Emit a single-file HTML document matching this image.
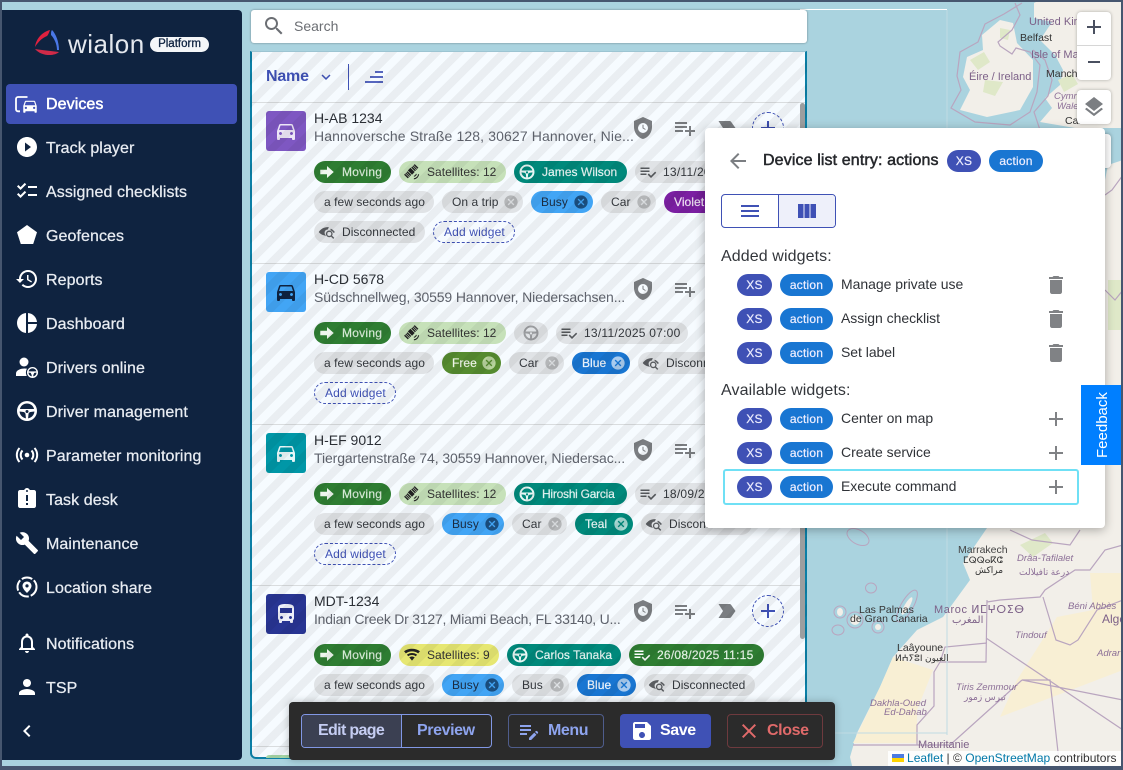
<!DOCTYPE html>
<html lang="en"><head><meta charset="utf-8"><title>Wialon Platform</title>
<style>
*{box-sizing:border-box}
html,body{margin:0;padding:0}
body{width:1123px;height:770px;position:relative;overflow:hidden;background:#aad3df;font-family:"Liberation Sans","Noto Sans CJK SC",sans-serif;color:#333}
svg{display:block;fill:currentColor}
.a{position:absolute}
#map{position:absolute;left:0;top:0;filter:blur(.35px)}
#map text{font-family:"Liberation Sans","DejaVu Sans","Noto Sans CJK SC",sans-serif}
.frame{position:absolute;inset:0;border:solid #46566f;border-width:2px 2px 4px 2px;pointer-events:none;z-index:50}
#side{position:absolute;left:2px;top:10px;width:240px;height:750px;background:#0f2340;border-radius:0 4px 4px 0}
.nav{position:absolute;left:46px;height:24px;line-height:24px;font-size:16px;color:#e8ecf2;white-space:nowrap;-webkit-text-stroke:.25px #e8ecf2;letter-spacing:.08px}
.ni{position:absolute;left:15px;width:24px;height:24px;color:#fff}
#act{position:absolute;left:6px;top:84px;width:231px;height:40px;background:#3f51b5;border-radius:4px}
#search{position:absolute;left:251px;top:10px;width:556px;height:33px;background:#fff;border-radius:3px;box-shadow:0 0 2px rgba(0,0,0,.4);z-index:3}
#panel{position:absolute;left:250px;top:51px;width:557px;height:708px;background:#f6fbff;border:2px solid #0b7fa6;border-top:1px solid #9cc4d2;border-radius:0 0 6px 6px;overflow:hidden}
#stripes{position:absolute;left:250px;top:52px;width:557px;height:706px;background:repeating-linear-gradient(135deg,rgba(0,0,0,.052) 0 8px,transparent 8px 16px);z-index:2;pointer-events:none;border-radius:0 0 6px 6px}
.row{position:absolute;left:0;width:1123px;height:161px}
.line{position:absolute;left:252px;width:553px;height:1px;background:#d9dcde;z-index:1}
.tile{position:absolute;left:266px;top:8px;width:40px;height:40px;border-radius:3px}
.tile svg{position:absolute;left:8px;top:8px;width:24px;height:24px}
.t1{position:absolute;left:314px;top:6px;font-size:14px;line-height:18px;color:#2b2f36;white-space:nowrap}
.t2{position:absolute;left:314px;top:24px;font-size:14px;line-height:18px;color:#60646e;white-space:nowrap}
.c{position:absolute;height:22px;border-radius:11px;line-height:22px;font-size:12px;white-space:nowrap;padding-left:10px;letter-spacing:.05px;overflow:hidden}
.c svg{position:absolute}
.c .l{left:4px;top:2px;width:18px;height:18px}
.c .x{right:4px;top:3px;width:16px;height:16px}
.g{background:#e0e3e6;color:#34383d}.g .x{color:#b4b6b8}.g .l{color:#55585c}
.mv{background:#2e7d32;color:#d8ebd8;padding-left:28px;-webkit-text-stroke:.2px #d8ebd8;letter-spacing:.25px}.mv .l{color:#eef6ee}
.sat{background:#c6e1b9;color:#333;padding-left:28px}
.sat9{background:#e6e772;color:#333;padding-left:28px}
.dr{background:#00897b;color:#e4f4f2;padding-left:28px;-webkit-text-stroke:.2px #e4f4f2}.dr .l{color:#e8f6f4}
.dt{background:#e0e3e6;color:#34383d;padding-left:28px;letter-spacing:.25px}.dt .l{color:#55585c}
.dtg{background:#2e7d32;color:#e6f3e6;padding-left:28px;-webkit-text-stroke:.2px #e6f3e6;letter-spacing:.25px}
.dc{background:#e0e3e6;color:#34383d;padding-left:28px}.dc .l{color:#5a5d61}
.busy{background:#42a5f5;color:#1b2b40}.busy .x{color:#1a4f80}
.blue{background:#1976d2;color:#eef5fc;-webkit-text-stroke:.2px #eef5fc}.blue .x{color:#a9cbee}
.free{background:#558b2f;color:#eef5e8;-webkit-text-stroke:.2px #eef5e8}.free .x{color:#b6d39c}
.teal{background:#00897b;color:#e8f6f4;-webkit-text-stroke:.2px #e8f6f4}.teal .x{color:#a5d8d2}
.vio{background:#7b1fa2;color:#f0e4f5;-webkit-text-stroke:.2px #f0e4f5}
.add{background:transparent;border:1px dashed #3f51b5;color:#3f51b5;line-height:20px;padding-left:10px;letter-spacing:.15px}
.ic{position:absolute;width:24px;height:24px;top:13px;color:#7b7e82}
.pl{position:absolute;left:752px;top:9px;width:32px;height:32px;border:1px dashed #3f51b5;border-radius:50%;color:#3f51b5}
.pl svg{position:absolute;left:3px;top:3px;width:24px;height:24px}
#pop{position:absolute;left:705px;top:128px;width:400px;height:400px;background:#fff;border-radius:4px;box-shadow:0 2px 10px rgba(0,0,0,.3);z-index:6}
.pc{position:absolute;height:22px;border-radius:11px;line-height:22px;text-align:center;font-size:12px;color:#eef;-webkit-text-stroke:.2px #eef;letter-spacing:.2px}
.xs{background:#3f51b5}.ac{background:#1976d2}
.wt{position:absolute;font-size:14px;line-height:20px;color:#2f3237;white-space:nowrap;letter-spacing:-.04px}
.wh{position:absolute;left:16px;font-size:16px;line-height:22px;color:#33363b;letter-spacing:.1px;white-space:nowrap}
.wi{position:absolute;left:339px;width:24px;height:24px;color:#808285}
#bar{position:absolute;left:289px;top:702px;width:546px;height:58px;background:#2b2b2b;border-radius:4px;box-shadow:0 0 8px rgba(0,0,0,.25);z-index:7}
.bb{position:absolute;top:12px;height:34px;line-height:32px;font-size:16px;font-weight:700;border-radius:4px;white-space:nowrap;letter-spacing:-.4px}
.bb svg{position:absolute;width:24px;height:24px;top:4px}
#fb{position:absolute;left:1081px;top:385px;width:42px;height:80px;background:#007fff;color:#fff;z-index:8;font-size:15px}
#fb span{position:absolute;left:1px;top:0;width:42px;height:80px;writing-mode:vertical-rl;transform:rotate(180deg);text-align:center;line-height:42px}
.zc{position:absolute;background:#fff;border-radius:4px;box-shadow:0 0 3px rgba(0,0,0,.3);z-index:4}
#attr{position:absolute;left:888px;top:751px;width:233px;height:15px;background:rgba(255,255,255,.85);font-size:12px;line-height:15px;color:#333;white-space:nowrap;z-index:5;padding-left:19px;letter-spacing:.02px}
#attr b{font-weight:400;color:#0078a8}
</style></head><body>

<svg width="0" height="0" style="position:absolute">
<symbol id="car" viewBox="0 0 24 24"><path d="M18.92 6.01C18.72 5.42 18.16 5 17.5 5h-11c-.66 0-1.21.42-1.42 1.01L3 12v8c0 .55.45 1 1 1h1c.55 0 1-.45 1-1v-1h12v1c0 .55.45 1 1 1h1c.55 0 1-.45 1-1v-8l-2.08-5.99zM6.5 16c-.83 0-1.5-.67-1.5-1.5S5.67 13 6.5 13s1.5.67 1.5 1.5S7.33 16 6.5 16zm11 0c-.83 0-1.5-.67-1.5-1.5s.67-1.5 1.5-1.5 1.5.67 1.5 1.5-.67 1.5-1.5 1.5zM5 11l1.5-4.5h11L19 11H5z"/></symbol>
<symbol id="bus" viewBox="0 0 24 24"><path d="M4 16c0 .88.39 1.67 1 2.22V20c0 .55.45 1 1 1h1c.55 0 1-.45 1-1v-1h8v1c0 .55.45 1 1 1h1c.55 0 1-.45 1-1v-1.78c.61-.55 1-1.34 1-2.22V6c0-3.5-3.58-4-8-4s-8 .5-8 4v10zm3.5 1c-.83 0-1.5-.67-1.5-1.5S6.67 14 7.5 14s1.5.67 1.5 1.5S8.33 17 7.5 17zm9 0c-.83 0-1.5-.67-1.5-1.5s.67-1.5 1.5-1.5 1.5.67 1.5 1.5-.67 1.5-1.5 1.5zm1.5-6H6V6h12v5z"/></symbol>
<symbol id="arrow" viewBox="0 0 24 24"><path d="M12 4v5H3v6h9v5l9-8z"/></symbol>
<symbol id="sat" viewBox="0 0 24 24"><g transform="rotate(-45 11 11)"><rect x="8.5" y="7" width="5" height="8" fill="#222"/><rect x="1" y="7.5" width="6.5" height="7" fill="#222"/><rect x="14.5" y="7.5" width="6.5" height="7" fill="#222"/><path d="M3.2 7.5v7M5.3 7.5v7M16.7 7.5v7M18.8 7.5v7" stroke="#cfe3c4" stroke-width=".7" fill="none"/></g><path d="M14.5 21c3 0 6-2.6 6.3-6M14.5 17.5c1.5 0 3-1.2 3.2-3" stroke="#222" stroke-width="1.5" fill="none"/></symbol>
<symbol id="wifi" viewBox="0 0 24 24"><path d="M12 19.5l3.6-4.4c-2.2-1.5-5-1.5-7.2 0z" fill="#222"/><path d="M6.9 13.6c3-2.2 7.2-2.2 10.2 0l1.7-2.1c-4-3-9.6-3-13.6 0zM3.8 9.8c4.8-3.6 11.6-3.6 16.4 0L22.6 7C16.4 2.6 7.6 2.6 1.4 7z" fill="#222"/></symbol>
<symbol id="wheel" viewBox="0 0 24 24"><path fill-rule="evenodd" d="M12 2a10 10 0 1 0 0 20 10 10 0 0 0 0-20zm0 2.5c3.4 0 6.3 2.2 7.1 5.5H4.9C5.7 6.7 8.6 4.5 12 4.5zM4.6 12.5l4 .5c1 .2 1.7 1 1.9 2l.4 4.4a7.5 7.5 0 0 1-6.3-6.9zm14.8 0a7.5 7.5 0 0 1-6.3 6.9l.4-4.4c.2-1 .9-1.8 1.9-2zM12 11a1.5 1.5 0 1 1 0 3 1.5 1.5 0 0 1 0-3z"/></symbol>
<symbol id="chk" viewBox="0 0 24 24"><path d="M14 10H2v2h12v-2zm0-4H2v2h12V6zM2 16h8v-2H2v2zm19.5-4.5L23 13l-6.99 7-4.51-4.5L13 14l3.01 3 5.49-5.5z"/></symbol>
<symbol id="can" viewBox="0 0 24 24"><path d="M12 2C6.47 2 2 6.47 2 12s4.47 10 10 10 10-4.47 10-10S17.53 2 12 2zm5 13.59L15.59 17 12 13.41 8.41 17 7 15.59 10.59 12 7 8.41 8.41 7 12 10.59 15.59 7 17 8.41 13.41 12 17 15.59z"/></symbol>
<symbol id="disc" viewBox="0 0 24 24"><path d="M1 12C4 7.5 9 5 14.5 5.6l-1.6 3.2C10.5 8.7 8.8 10.500 8.800 13c0 1.600.8 3 2 4C6.500 16.500 3 14.800 1 12z"/><path d="M17 7.500c2.200 1 4 2.600 5.500 4.500l-1.500 1.500c-1-1.600-2.500-3-4.500-4z"/><circle cx="15" cy="14.500" r="3.600" fill="none" stroke="currentColor" stroke-width="1.800"/><path d="M17.500 17l3.500 3.500" stroke="currentColor" stroke-width="2" fill="none"/></symbol>
<symbol id="shield" viewBox="0 0 24 24"><path fill-rule="evenodd" d="M12 1 3 5v6c0 5.550 3.840 10.740 9 12 5.160-1.260 9-6.450 9-12V5l-9-4zm0 6a5 5 0 1 1 0 10 5 5 0 0 1 0-10z"/><path d="M11.500 8.800h1v3l2.200 1.300-.5.8-2.700-1.600z"/></symbol>
<symbol id="pladd" viewBox="0 0 24 24"><path d="M14 10H2v2h12v-2zm0-4H2v2h12V6zm4 8v-4h-2v4h-4v2h4v4h2v-4h4v-2h-4zM2 16h8v-2H2v2z"/></symbol>
<symbol id="label" viewBox="0 0 24 24"><path d="M3.500 18.990l11 .01c.67 0 1.270-.33 1.630-.84L20.500 12l-4.370-6.160c-.36-.51-.96-.84-1.630-.84l-11 .01L8 12l-4.500 6.990z"/></symbol>
<symbol id="plus" viewBox="0 0 24 24"><path d="M19 13h-6v6h-2v-6H5v-2h6V5h2v6h6v2z"/></symbol>
<symbol id="trash" viewBox="0 0 24 24"><path d="M6 19c0 1.100.9 2 2 2h8c1.100 0 2-.9 2-2V7H6v12zM19 4h-3.500l-1-1h-5l-1 1H5v2h14V4z"/></symbol>
</svg>

<svg id="map" width="1123" height="770" viewBox="0 0 1123 770">
<rect width="1123" height="770" fill="#aad3df"/>
<g fill="#f2efe9" stroke="none">
<path d="M982 35 1000 20 1013 23 1017 43 1033 60 1033 87 1020 110 987 117 960 110 970 90 963 77 967 57 983 50z"/>
<path d="M1034 3 1040 0 1123 0 1123 128 1075 128 1040 122 1052 108 1045 98 1060 85 1063 70 1055 55 1040 40 1052 22 1034 18z"/>
<path d="M1108 165 1123 160 1123 385 1105 385 1105 180z"/>
<path d="M987 528 963 563 970 580 943 617 917 630 893 657 880 687 857 733 850 757 853 770 1123 770 1123 385 1105 385 1080 528z"/>
</g>
<g fill="#dfe8c8" stroke="none"><path d="M970 60l14-8 6 10-12 8zM985 80l18 2-8 14-12-4zM1000 28l10 2-2 10-8-2zM1058 80l14-6 6 10-14 8zM1108 280h15v50h-15zM1020 545l25-12 8 10-20 14z"/></g>
<g fill="#f8efd4" stroke="none"><path d="M893 657 933 670 917 710 917 743 853 743 880 687z"/><path d="M1090 573 1123 573 1123 670 1000 717 1017 680 1057 617 1093 610z"/></g>
<g fill="none" stroke="#b9a5bf" stroke-width="1.200">
<path d="M1022 3 1004 14 985 24 978 42 960 52 957 76 961 90 951 108 975 122 1010 125 1030 112 1037 92 1040 65 1030 52 1016 48 1012 54 1000 46 998 42 1012 30 1020 15 1015 3"/>
<path d="M1040 130 1034 112 1048 96 1052 80 1045 60 1033 50"/>
<path d="M1105 195 1112 190 1123 175M1105 290 1115 300 1123 290"/>
<path d="M987 600 986 662 940 662 945 647 987 643M986 638 1123 730M940 662 934 672 934 706 917 725 917 745 853 745M1022 680 1123 700M1022 680 1050 680 1060 770M1022 680 1000 700 950 745 917 745M987 602 1000 600 1040 597 1045 590 1075 570 1090 570 1105 550 1123 545M1010 530 1032 540 1070 545 1080 530"/>
<path d="M1043 597 1056 640 1070 645 1078 640 1097 610 1123 600"/>
</g>
<g fill="#aad3df" stroke="#b9a5bf" stroke-width="1"><ellipse cx="871" cy="588" rx="5.500" ry="5"/><ellipse cx="840" cy="612" rx="6" ry="6"/><ellipse cx="838" cy="630" rx="6" ry="5"/><ellipse cx="878" cy="627" rx="6" ry="6"/><ellipse cx="855" cy="620" rx="8" ry="8"/><ellipse cx="907" cy="606" rx="6" ry="18" transform="rotate(30 907 606)"/><ellipse cx="858" cy="537" rx="12" ry="7" transform="rotate(30 858 537)"/></g>
<g fill="#f2efe9"><ellipse cx="840" cy="612" rx="3" ry="4"/><ellipse cx="855" cy="620" rx="5" ry="5"/><ellipse cx="878" cy="627" rx="3" ry="3"/><ellipse cx="907" cy="606" rx="2.500" ry="10" transform="rotate(30 907 606)"/></g>
<path d="M947 10V735M800 733H947" stroke="#c0dbe3" stroke-width="1" fill="none"/>
<path d="M800 9.500H947" stroke="#fff" stroke-width="1" fill="none"/>
<g font-size="10.500" fill="#333">
<text x="1020" y="41">Belfast</text><text x="1046" y="77">Manchester</text><text x="1065" y="124">Cardiff</text>
<text x="958" y="553" fill="#444">Marrakech</text><text x="963" y="563" font-size="9">ⵎⵕⵕⴰⴽⵛ</text><text x="975" y="573" font-size="9">مراكش</text>
<text x="859" y="613">Las Palmas</text><text x="850" y="622">de Gran Canaria</text><text x="897" y="651">Laâyoune</text><text x="895" y="661" font-size="9">ⵍⵄⵢⵓⵏ العيون</text>
</g>
<g font-size="11" fill="#7d6188">
<text x="1029" y="25">United Kingdom</text><text x="1031" y="58">Isle of Man</text><text x="969" y="80">Éire / Ireland</text>
<text x="934" y="613" letter-spacing=".6">Maroc ⵍⵎⵖⵔⵉⴱ</text><text x="952" y="623" font-size="10">المغرب</text><text x="918" y="748">Mauritanie</text>
</g>
<g font-size="9.500" font-style="italic" fill="#8c6f97">
<text x="1017" y="561">Drâa-Tafilalet</text><text x="1019" y="575" font-style="normal" font-size="9">درعة تافيلالت</text><text x="1015" y="638">Tindouf</text><text x="956" y="690">Tiris Zemmour</text><text x="964" y="700" font-style="normal" font-size="9">تيرس زمور</text>
<text x="870" y="706">Dakhla-Oued</text><text x="884" y="715">Ed-Dahab</text><text x="1068" y="609">Béni Abbès</text><text x="1097" y="656">Adrar</text>
<text x="1054" y="99">Cymru /</text><text x="1057" y="109">Wales</text>
</g>
<text x="1102" y="623" font-size="12" fill="#7d6188">Algérie</text>
</svg>

<div id="side"></div>
<svg class="a" style="left:33px;top:29px" width="28" height="28" viewBox="0 0 28 28">
<path d="M2 18C3 10 9 3 17 1 16 4 15 6 14 7 9 9 5 13 2 18z" fill="#e0213f"/>
<path d="M19 1C23 5 26 13 26 21L24 21C24 15 21 9 18 6 18 4 18 2 19 1z" fill="#4a78e8"/>
<path d="M2 20C8 21 18 22 26 23 22 27 9 28 2 20z" fill="#d02a48"/>
</svg>
<div class="a" style="left:68px;top:28px;font-size:26px;line-height:32px;color:#e4e8ee;font-weight:400;letter-spacing:.5px">wialon</div>
<div class="a" style="left:150px;top:37px;width:59px;height:15px;border-radius:8px;background:#f4f6f8;color:#0f2340;text-align:center;font-size:11.500px;line-height:15px;-webkit-text-stroke:.3px #0f2340">Platform</div>
<div id="act"></div>
<div class="nav" style="top:93px;-webkit-text-stroke:.5px #fff;color:#fff">Devices</div>
<div class="nav" style="top:137px">Track player</div>
<div class="nav" style="top:181px">Assigned checklists</div>
<div class="nav" style="top:225px">Geofences</div>
<div class="nav" style="top:269px">Reports</div>
<div class="nav" style="top:313px">Dashboard</div>
<div class="nav" style="top:357px">Drivers online</div>
<div class="nav" style="top:401px">Driver management</div>
<div class="nav" style="top:445px">Parameter monitoring</div>
<div class="nav" style="top:489px">Task desk</div>
<div class="nav" style="top:533px">Maintenance</div>
<div class="nav" style="top:577px">Location share</div>
<div class="nav" style="top:633px">Notifications</div>
<div class="nav" style="top:677px">TSP</div>
<svg class="ni" style="top:91px" viewBox="0 0 24 24"><path d="M5 20.300H3a2 2 0 0 1-2-2V8a2 2 0 0 1 2-2h9.500" fill="none" stroke="#fff" stroke-width="1.800"/><g transform="translate(6 6) scale(.75)"><path d="M18.920 6.010C18.720 5.420 18.160 5 17.500 5h-11c-.66 0-1.210.42-1.420 1.010L3 12v8c0 .55.45 1 1 1h1c.55 0 1-.45 1-1v-1h12v1c0 .55.45 1 1 1h1c.55 0 1-.45 1-1v-8l-2.080-5.990zM6.500 16c-.83 0-1.500-.67-1.500-1.500S5.670 13 6.500 13s1.500.67 1.500 1.500S7.330 16 6.500 16zm11 0c-.83 0-1.500-.67-1.500-1.500s.67-1.500 1.500-1.500 1.500.67 1.500 1.500-.67 1.500-1.500 1.500zM5 11l1.500-4.500h11L19 11H5z" stroke="#3f51b5" stroke-width="2" paint-order="stroke"/></g></svg>
<svg class="ni" style="top:135px" viewBox="0 0 24 24"><path d="M12 2C6.480 2 2 6.480 2 12s4.480 10 10 10 10-4.480 10-10S17.520 2 12 2zm-2 14.500v-9l6 4.500-6 4.500z"/></svg>
<svg class="ni" style="top:179px" viewBox="0 0 24 24"><path d="M22 7h-9v2h9V7zm0 8h-9v2h9v-2zM5.540 11 2 7.460l1.410-1.410 2.120 2.120 4.240-4.240 1.410 1.410L5.540 11zm0 8L2 15.460l1.410-1.410 2.120 2.120 4.240-4.240 1.410 1.410L5.540 19z"/></svg>
<svg class="ni" style="top:223px" viewBox="0 0 24 24"><path d="M2 9.200 12 2l10 7.200-3.800 11.800H5.800z"/></svg>
<svg class="ni" style="top:267px" viewBox="0 0 24 24"><path d="M13 3c-4.970 0-9 4.030-9 9H1l3.890 3.890.07.140L9 12H6c0-3.870 3.130-7 7-7s7 3.130 7 7-3.130 7-7 7c-1.930 0-3.680-.79-4.940-2.060l-1.420 1.420C8.270 19.990 10.510 21 13 21c4.970 0 9-4.030 9-9s-4.030-9-9-9zm-1 5v5l4.280 2.540.72-1.210-3.500-2.080V8H12z"/></svg>
<svg class="ni" style="top:311px" viewBox="0 0 24 24"><path d="M11 2v20c-5.070-.5-9-4.790-9-10s3.930-9.500 9-10zm2.030 0v8.990H22c-.47-4.740-4.240-8.520-8.970-8.990zm0 11.010V22c4.740-.47 8.500-4.250 8.970-8.990h-8.970z"/></svg>
<svg class="ni" style="top:355px" viewBox="0 0 24 24"><circle cx="9" cy="7" r="4.500"/><path d="M1 21v-2.500C1 15 6 13.500 9.500 13.500c1 0 1.500.1 2.500.3-1.200 1.800-1.500 4.700-.2 7.200z"/><path fill-rule="evenodd" d="M17.500 12a5.500 5.500 0 1 0 0 11 5.500 5.500 0 0 0 0-11zm0 1.400c1.900 0 3.500 1.200 3.900 3h-7.800c.4-1.800 2-3 3.900-3zm-4 4.200 2.200.3 1 2.100v1.400a4.200 4.200 0 0 1-3.200-3.800zm8 0a4.200 4.200 0 0 1-3.200 3.800v-1.400l1-2.100z"/></svg>
<svg class="ni" style="top:399px"><use href="#wheel"/></svg>
<svg class="ni" style="top:443px" viewBox="0 0 24 24"><circle cx="12" cy="12" r="2.300"/><g fill="none" stroke="#fff" stroke-width="2"><path d="M7.500 7.500a6.500 6.500 0 0 0 0 9M16.500 7.500a6.500 6.500 0 0 1 0 9"/><path d="M4.500 5a10.500 10.500 0 0 0 0 14M19.500 5a10.500 10.500 0 0 1 0 14"/></g></svg>
<svg class="ni" style="top:487px" viewBox="0 0 24 24"><path d="M19 3h-4.180C14.400 1.840 13.300 1 12 1c-1.300 0-2.400.84-2.820 2H5c-1.100 0-2 .9-2 2v14c0 1.100.9 2 2 2h14c1.100 0 2-.9 2-2V5c0-1.100-.9-2-2-2zm-6 15h-2v-2h2v2zm0-4h-2V8h2v6zm-1-9c-.55 0-1-.45-1-1s.45-1 1-1 1 .45 1 1-.45 1-1 1z"/></svg>
<svg class="ni" style="top:531px" viewBox="0 0 24 24"><path d="M22.700 19l-9.100-9.100c.9-2.300.4-5-1.500-6.900-2-2-5-2.400-7.400-1.300L9 6 6 9 1.600 4.700C.4 7.100.9 10.100 2.900 12.100c1.900 1.900 4.600 2.400 6.900 1.500l9.100 9.100c.4.4 1 .4 1.400 0l2.300-2.300c.5-.4.5-1.100.1-1.400z"/></svg>
<svg class="ni" style="top:575px" viewBox="0 0 24 24"><circle cx="12" cy="12" r="9.500" fill="none" stroke="#fff" stroke-width="2" stroke-dasharray="11 2 11 2 11 2 11 2"/><path fill-rule="evenodd" d="M12 6.500c-2.500 0-4.500 2-4.500 4.400C7.500 14 12 18 12 18s4.500-4 4.500-7.100c0-2.400-2-4.400-4.500-4.400zm0 6a1.600 1.600 0 1 1 0-3.200 1.600 1.600 0 0 1 0 3.200z"/></svg>
<svg class="ni" style="top:631px" viewBox="0 0 24 24"><path d="M12 22c1.100 0 2-.9 2-2h-4c0 1.100.9 2 2 2zm6-6v-5c0-3.070-1.630-5.640-4.500-6.320V4c0-.83-.67-1.500-1.500-1.500s-1.500.67-1.500 1.500v.68C7.640 5.360 6 7.920 6 11v5l-2 2v1h16v-1l-2-2zm-2 1H8v-6c0-2.480 1.510-4.500 4-4.500s4 2.020 4 4.500v6z"/></svg>
<svg class="ni" style="top:675px" viewBox="0 0 24 24"><path d="M12 12c2.210 0 4-1.790 4-4s-1.790-4-4-4-4 1.790-4 4 1.790 4 4 4zm0 2c-2.670 0-8 1.340-8 4v2h16v-2c0-2.660-5.330-4-8-4z"/></svg>
<svg class="ni" style="top:719px" viewBox="0 0 24 24"><path d="M15.410 7.410 14 6l-6 6 6 6 1.410-1.410L10.830 12z"/></svg>

<div id="search">
<svg class="a" style="left:11px;top:4px;color:#6b6e73" width="24" height="24" viewBox="0 0 24 24"><path d="M15.500 14h-.79l-.28-.27C15.410 12.590 16 11.110 16 9.500 16 5.910 13.090 3 9.500 3S3 5.910 3 9.500 5.910 16 9.500 16c1.610 0 3.090-.59 4.230-1.570l.27.28v.79l5 4.990L20.490 19l-4.990-5zm-6 0C7.010 14 5 11.990 5 9.500S7.010 5 9.500 5 14 7.010 14 9.500 11.990 14 9.500 14z"/></svg>
<div class="a" style="left:43px;top:6px;font-size:14px;line-height:20px;color:#6b6e73">Search</div>
</div>

<div id="panel"></div>
<div class="a" style="left:266px;top:67px;font-size:16px;line-height:20px;font-weight:700;color:#3f51b5;z-index:1;letter-spacing:-.2px">Name</div>
<svg class="a" style="left:317px;top:68px;color:#3f51b5;z-index:1" width="18" height="18" viewBox="0 0 24 24"><path d="M7.410 8.590 12 13.170l4.590-4.580L18 10l-6 6-6-6z"/></svg>
<div class="a" style="left:348px;top:64px;width:1px;height:26px;background:#3f51b5;z-index:1"></div>
<svg class="a" style="left:364px;top:70px;z-index:1" width="21" height="15" viewBox="0 0 21 15"><path d="M11 2h8M6 7h13M1 12h18" stroke="#3f51b5" stroke-width="1.700" fill="none"/></svg>
<div class="line" style="top:102px"></div>
<div class="line" style="top:263px"></div>
<div class="line" style="top:424px"></div>
<div class="line" style="top:585px"></div>
<div class="line" style="top:746px"></div>

<!-- Row 1 -->
<div class="row" style="top:103px;z-index:1">
<div class="tile" style="background:#7e57c2;color:#ece6f7"><svg><use href="#car"/></svg></div>
<div class="t1">H-AB 1234</div>
<div class="t2" style="letter-spacing:.12px">Hannoversche Straße 128, 30627 Hannover, Nie...</div>
<svg class="ic" style="left:631px"><use href="#shield"/></svg>
<svg class="ic" style="left:673px"><use href="#pladd"/></svg>
<svg class="ic" style="left:715px"><use href="#label"/></svg>
<div class="pl"><svg><use href="#plus"/></svg></div>
<div class="c mv" style="left:314px;top:58px;width:77px"><svg class="l"><use href="#arrow"/></svg>Moving</div>
<div class="c sat" style="left:399px;top:58px;width:107px"><svg class="l" style="left:4px"><use href="#sat"/></svg>Satellites: 12</div>
<div class="c dr" style="left:514px;top:58px;width:113px"><svg class="l"><use href="#wheel"/></svg>James Wilson</div>
<div class="c dt" style="left:635px;top:58px;width:125px"><svg class="l"><use href="#chk"/></svg>13/11/2025 07:00</div>
<div class="c g" style="left:314px;top:88px;width:120px">a few seconds ago</div>
<div class="c g" style="left:442px;top:88px;width:81px">On a trip<svg class="x"><use href="#can"/></svg></div>
<div class="c busy" style="left:531px;top:88px;width:62px">Busy<svg class="x"><use href="#can"/></svg></div>
<div class="c g" style="left:601px;top:88px;width:55px">Car<svg class="x"><use href="#can"/></svg></div>
<div class="c vio" style="left:664px;top:88px;width:70px">Violet</div>
<div class="c dc" style="left:314px;top:118px;width:111px"><svg class="l"><use href="#disc"/></svg>Disconnected</div>
<div class="c add" style="left:433px;top:118px;width:82px">Add widget</div>
</div>

<!-- Row 2 -->
<div class="row" style="top:264px;z-index:1">
<div class="tile" style="background:#42a5f5;color:#0f2340"><svg><use href="#car"/></svg></div>
<div class="t1">H-CD 5678</div>
<div class="t2" style="letter-spacing:-.14px">Südschnellweg, 30559 Hannover, Niedersachsen...</div>
<svg class="ic" style="left:631px"><use href="#shield"/></svg>
<svg class="ic" style="left:673px"><use href="#pladd"/></svg>
<div class="c mv" style="left:314px;top:58px;width:77px"><svg class="l"><use href="#arrow"/></svg>Moving</div>
<div class="c sat" style="left:399px;top:58px;width:107px"><svg class="l"><use href="#sat"/></svg>Satellites: 12</div>
<div class="c g" style="left:514px;top:58px;width:34px"><svg class="l" style="left:8px;color:#9a9c9f"><use href="#wheel"/></svg></div>
<div class="c dt" style="left:556px;top:58px;width:132px"><svg class="l"><use href="#chk"/></svg>13/11/2025 07:00</div>
<div class="c g" style="left:314px;top:88px;width:120px">a few seconds ago</div>
<div class="c free" style="left:442px;top:88px;width:59px">Free<svg class="x"><use href="#can"/></svg></div>
<div class="c g" style="left:509px;top:88px;width:55px">Car<svg class="x"><use href="#can"/></svg></div>
<div class="c blue" style="left:572px;top:88px;width:58px">Blue<svg class="x"><use href="#can"/></svg></div>
<div class="c dc" style="left:638px;top:88px;width:111px"><svg class="l"><use href="#disc"/></svg>Disconnected</div>
<div class="c add" style="left:314px;top:118px;width:82px">Add widget</div>
</div>

<!-- Row 3 -->
<div class="row" style="top:425px;z-index:1">
<div class="tile" style="background:#0097a7;color:#e6f6f8"><svg><use href="#car"/></svg></div>
<div class="t1">H-EF 9012</div>
<div class="t2" style="letter-spacing:-.09px">Tiergartenstraße 74, 30559 Hannover, Niedersac...</div>
<svg class="ic" style="left:631px"><use href="#shield"/></svg>
<svg class="ic" style="left:673px"><use href="#pladd"/></svg>
<div class="c mv" style="left:314px;top:58px;width:77px"><svg class="l"><use href="#arrow"/></svg>Moving</div>
<div class="c sat" style="left:399px;top:58px;width:107px"><svg class="l"><use href="#sat"/></svg>Satellites: 12</div>
<div class="c dr" style="left:514px;top:58px;width:113px;letter-spacing:-.25px"><svg class="l"><use href="#wheel"/></svg>Hiroshi Garcia</div>
<div class="c dt" style="left:635px;top:58px;width:125px"><svg class="l"><use href="#chk"/></svg>18/09/2025 07:00</div>
<div class="c g" style="left:314px;top:88px;width:120px">a few seconds ago</div>
<div class="c busy" style="left:442px;top:88px;width:62px">Busy<svg class="x"><use href="#can"/></svg></div>
<div class="c g" style="left:512px;top:88px;width:55px">Car<svg class="x"><use href="#can"/></svg></div>
<div class="c teal" style="left:575px;top:88px;width:58px">Teal<svg class="x"><use href="#can"/></svg></div>
<div class="c dc" style="left:641px;top:88px;width:111px"><svg class="l"><use href="#disc"/></svg>Disconnected</div>
<div class="c add" style="left:314px;top:118px;width:82px">Add widget</div>
</div>

<!-- Row 4 -->
<div class="row" style="top:586px;z-index:1">
<div class="tile" style="background:#283593;color:#eef0fa"><svg><use href="#bus"/></svg></div>
<div class="t1">MDT-1234</div>
<div class="t2" style="letter-spacing:-.23px">Indian Creek Dr 3127, Miami Beach, FL 33140, U...</div>
<svg class="ic" style="left:631px"><use href="#shield"/></svg>
<svg class="ic" style="left:673px"><use href="#pladd"/></svg>
<svg class="ic" style="left:715px"><use href="#label"/></svg>
<div class="pl"><svg><use href="#plus"/></svg></div>
<div class="c mv" style="left:314px;top:58px;width:77px"><svg class="l"><use href="#arrow"/></svg>Moving</div>
<div class="c sat9" style="left:399px;top:58px;width:100px"><svg class="l"><use href="#wifi"/></svg>Satellites: 9</div>
<div class="c dr" style="left:507px;top:58px;width:114px"><svg class="l"><use href="#wheel"/></svg>Carlos Tanaka</div>
<div class="c dtg" style="left:629px;top:58px;width:135px"><svg class="l" style="color:#fff"><use href="#chk"/></svg>26/08/2025 11:15</div>
<div class="c g" style="left:314px;top:88px;width:120px">a few seconds ago</div>
<div class="c busy" style="left:442px;top:88px;width:62px">Busy<svg class="x"><use href="#can"/></svg></div>
<div class="c g" style="left:512px;top:88px;width:57px">Bus<svg class="x"><use href="#can"/></svg></div>
<div class="c blue" style="left:577px;top:88px;width:59px">Blue<svg class="x"><use href="#can"/></svg></div>
<div class="c dc" style="left:644px;top:88px;width:111px"><svg class="l"><use href="#disc"/></svg>Disconnected</div>
</div>

<div class="a" style="left:266px;top:755px;width:40px;height:3px;background:#a5d6a7;border-radius:3px 3px 0 0;z-index:1"></div>
<div class="a" style="left:800px;top:103px;width:5px;height:536px;background:#9c9e9f;border-radius:3px;z-index:3"></div>
<div id="stripes"></div>

<!-- Map controls -->
<div class="zc" style="left:1077px;top:12px;width:34px;height:68px">
<svg class="a" style="left:5px;top:3px;color:#4a5060" width="24" height="24" viewBox="0 0 24 24"><path d="M19 13h-6v6h-2v-6H5v-2h6V5h2v6h6v2z"/></svg>
<div class="a" style="left:0;top:33px;width:34px;height:1px;background:#d6d6d6"></div>
<div class="a" style="left:11px;top:49px;width:12px;height:2px;background:#4a5060"></div>
</div>
<div class="zc" style="left:1077px;top:90px;width:34px;height:34px"><svg class="a" style="left:5px;top:5px;color:#7b7e82" width="24" height="24" viewBox="0 0 24 24"><path d="M11.990 18.540l-7.370-5.730L3 14.070l9 7 9-7-1.630-1.270-7.380 5.740zM12 16l7.360-5.730L21 9l-9-7-9 7 1.630 1.270L12 16z"/></svg></div>
<div class="zc" style="left:1090px;top:134px;width:21px;height:34px"></div>

<!-- Popup -->
<div id="pop">
<svg class="a" style="left:21px;top:21px;color:#7b7e82" width="24" height="24" viewBox="0 0 24 24"><path d="M20 11H7.830l5.590-5.590L12 4l-8 8 8 8 1.410-1.410L7.830 13H20v-2z"/></svg>
<div class="a" style="left:58px;top:22px;font-size:16px;line-height:22px;color:#26282c;white-space:nowrap;-webkit-text-stroke:.5px #26282c;letter-spacing:.12px">Device list entry: actions</div>
<div class="pc xs" style="left:242px;top:22px;width:34px">XS</div>
<div class="pc ac" style="left:284px;top:22px;width:54px">action</div>
<div class="a" style="left:16px;top:66px;width:115px;height:34px;border:1px solid #3f51b5;border-radius:4px;overflow:hidden">
<div class="a" style="left:56px;top:0;width:58px;height:32px;background:#eef0fa;border-left:1px solid #3f51b5"></div>
<svg class="a" style="left:16px;top:4px;color:#3f51b5" width="24" height="24" viewBox="0 0 24 24"><path d="M3 18h18v-2H3v2zm0-5h18v-2H3v2zm0-7v2h18V6H3z"/></svg>
<svg class="a" style="left:73px;top:5px;color:#3f51b5" width="24" height="24" viewBox="0 0 24 24"><path d="M9.500 18h5V4h-5v14zM3 18h5.500V4H3v14zM15.500 4v14H21V4h-5.500z"/></svg>
</div>
<div class="wh" style="top:118px">Added widgets:</div>
<div class="pc xs" style="left:32px;top:146px;width:35px">XS</div><div class="pc ac" style="left:75px;top:146px;width:53px">action</div><div class="wt" style="left:136px;top:146px">Manage private use</div><svg class="wi" style="top:145px"><use href="#trash"/></svg>
<div class="pc xs" style="left:32px;top:180px;width:35px">XS</div><div class="pc ac" style="left:75px;top:180px;width:53px">action</div><div class="wt" style="left:136px;top:180px">Assign checklist</div><svg class="wi" style="top:179px"><use href="#trash"/></svg>
<div class="pc xs" style="left:32px;top:214px;width:35px">XS</div><div class="pc ac" style="left:75px;top:214px;width:53px">action</div><div class="wt" style="left:136px;top:214px">Set label</div><svg class="wi" style="top:213px"><use href="#trash"/></svg>
<div class="wh" style="top:252px">Available widgets:</div>
<div class="pc xs" style="left:32px;top:280px;width:35px">XS</div><div class="pc ac" style="left:75px;top:280px;width:53px">action</div><div class="wt" style="left:136px;top:280px">Center on map</div><svg class="wi" style="top:279px"><use href="#plus"/></svg>
<div class="pc xs" style="left:32px;top:314px;width:35px">XS</div><div class="pc ac" style="left:75px;top:314px;width:53px">action</div><div class="wt" style="left:136px;top:314px">Create service</div><svg class="wi" style="top:313px"><use href="#plus"/></svg>
<div class="a" style="left:18px;top:341px;width:356px;height:36px;border:2px solid #6fe0f5;border-radius:3px"></div>
<div class="pc xs" style="left:32px;top:348px;width:35px">XS</div><div class="pc ac" style="left:75px;top:348px;width:53px">action</div><div class="wt" style="left:136px;top:348px">Execute command</div><svg class="wi" style="top:347px"><use href="#plus"/></svg>
</div>

<div id="fb"><span>Feedback</span></div>

<!-- Bottom bar -->
<div id="bar">
<div class="a" style="left:12px;top:12px;width:191px;height:34px;border:1px solid #8197e4;border-radius:4px;overflow:hidden">
<div class="a" style="left:0;top:0;width:100px;height:32px;background:#3b4052;border-right:1px solid #8197e4"></div>
<div class="a" style="left:16px;top:0;line-height:32px;font-size:16px;font-weight:700;color:#c5cdf2;white-space:nowrap;letter-spacing:-.65px">Edit page</div>
<div class="a" style="left:115px;top:0;line-height:32px;font-size:16px;font-weight:700;color:#8ea4ee;white-space:nowrap;letter-spacing:-.4px">Preview</div>
</div>
<div class="bb" style="left:219px;width:96px;border:1px solid #4f5d8c;color:#8ea4ee;padding-left:39px"><svg style="left:8px;top:4px" viewBox="0 0 24 24"><path d="M3 10h11v2H3v-2zm0-2h11V6H3v2zm0 8h7v-2H3v2zm15.010-3.130.71-.71c.39-.39 1.020-.39 1.410 0l.71.71c.39.39.39 1.020 0 1.410l-.71.71-2.120-2.120zm-.71.71-5.300 5.300V21h2.120l5.300-5.300-2.120-2.120z"/></svg>Menu</div>
<div class="bb" style="left:331px;width:91px;background:#3f51b5;color:#fff;padding-left:40px;line-height:34px"><svg style="left:10px;top:5px" viewBox="0 0 24 24"><path d="M17 3H5c-1.110 0-2 .9-2 2v14c0 1.100.89 2 2 2h14c1.100 0 2-.9 2-2V7l-4-4zm-5 16c-1.660 0-3-1.340-3-3s1.340-3 3-3 3 1.340 3 3-1.340 3-3 3zm3-10H5V5h10v4z"/></svg>Save</div>
<div class="bb" style="left:438px;width:96px;border:1px solid #6e3a3e;color:#e06a6a;padding-left:39px"><svg style="left:9px;top:4px" viewBox="0 0 24 24"><path d="M19 6.410 17.590 5 12 10.590 6.410 5 5 6.410 10.590 12 5 17.590 6.410 19 12 13.410 17.590 19 19 17.590 13.410 12z"/></svg>Close</div>
</div>

<div id="attr">
<svg class="a" style="left:4px;top:3px" width="12" height="8" viewBox="0 0 12 8"><rect width="12" height="4" fill="#4c7be0"/><rect y="4" width="12" height="4" fill="#ffd500"/></svg>
<b>Leaflet</b> | © <b>OpenStreetMap</b> contributors
</div>
<div class="frame"></div>
</body></html>
